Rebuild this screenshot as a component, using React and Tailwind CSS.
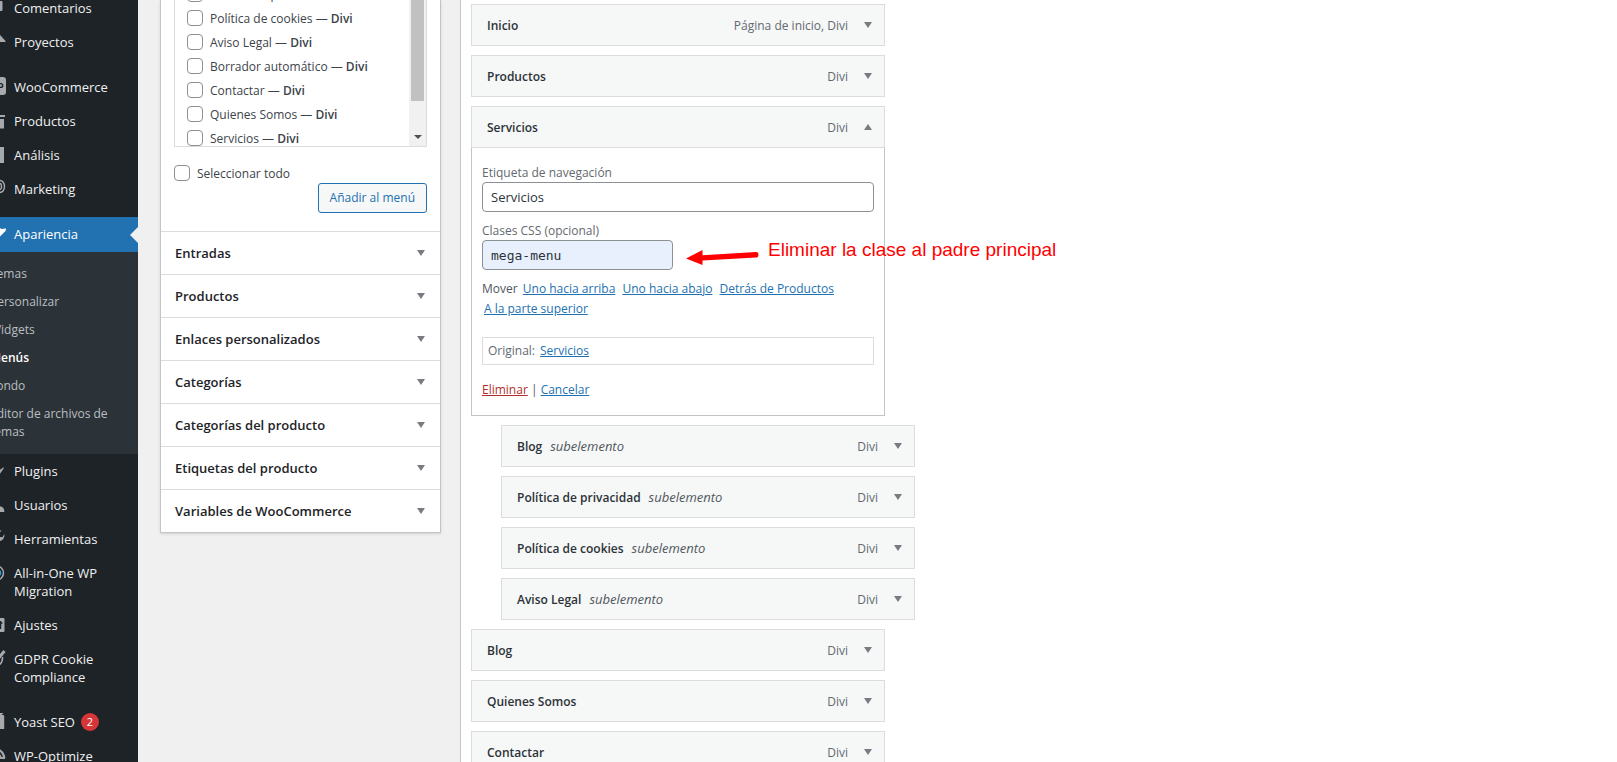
import React from "react";

const ICONS = {
  comments: <path d="M4 3h11.500q1 0 1 1v8q0 1-1 1H10l-5 4v-4H4q-1 0-1-1V4q0-1 1-1z" fill="#a7aaad" />,
  pin: <path d="M10 2l3 0 2 2 4.500 5v1H13l-7 8 1-9-4-1z" fill="#a7aaad" />,
  woo: (
    <>
      <rect x="0" y="0" width="20" height="18" rx="3" fill="#a7aaad" />
      <path d="M3 6l2 5 2-4 2 4 1-5" fill="none" stroke="#1d2327" strokeWidth="1.500" />
      <circle cx="14.800" cy="8.500" r="1.900" fill="none" stroke="#1d2327" strokeWidth="1.400" />
    </>
  ),
  archive: (
    <>
      <path d="M1 4h18v2H1z" fill="#a7aaad" />
      <path d="M2 8h16v9.500H2z" fill="#a7aaad" />
      <path d="M7 10h6v2H7z" fill="#1d2327" />
    </>
  ),
  chart: <path d="M2 11h4v7H2zM8 7h4v11H8zM13 2h5v16h-5z" fill="#a7aaad" />,
  marketing: (
    <g fill="none" stroke="#a7aaad" strokeWidth="1.400">
      <ellipse cx="14" cy="7.500" rx="4.500" ry="6" />
      <ellipse cx="13.500" cy="7.500" rx="2" ry="3" />
      <path d="M12 2L3 6v4l9 4" />
    </g>
  ),
  brush: <path d="M14 4l1.500 1 4.500-.5 0 1-.5 1.500L14 12.500l-2 1-8 6-2-2 7-7z" fill="#fff" />,
  plug: <path d="M18 6l-.5 1.800L14.500 12l-3 4-5 1-4 2 1-4 2-5 5-4 3 3z" fill="#a7aaad" />,
  user: (
    <>
      <circle cx="10" cy="6" r="4" fill="#a7aaad" />
      <path d="M2 17q0-6 6-6h4q6 0 6.300 5v1z" fill="#a7aaad" />
    </>
  ),
  wrench: (
    <path d="M18.300 5q.7 6-4.500 7L6 19l-4-3 8-8q-1-5 4-6.500h1.500L13 4.500l.5 3.500 3 .3z" fill="#a7aaad" />
  ),
  migration: (
    <>
      <ellipse cx="10.500" cy="10" rx="7" ry="7" fill="none" stroke="#a7aaad" strokeWidth="1.500" />
      <circle cx="12.300" cy="10" r="3" fill="#2aa3e0" />
    </>
  ),
  settings: (
    <>
      <rect x="2" y="3" width="16.500" height="14" rx="1" fill="#a7aaad" />
      <path d="M12 8h4.500M14.500 6v8" stroke="#1d2327" strokeWidth="1.500" />
      <path d="M6 6v8" stroke="#1d2327" strokeWidth="1.500" />
    </>
  ),
  gdpr: (
    <g fill="none" stroke="#a7aaad">
      <path d="M18.500 2L11 11 7 7" strokeWidth="3" />
      <path d="M16.500 8q.5 6-5.500 9.500Q4 14 4 4l7-2" strokeWidth="1.600" />
    </g>
  ),
  yoast: <path d="M4 3h9l1-2h3.500L15.500 3H17q1.200 0 1.200 1.200V17H4q-2 0-2-2V5q0-2 2-2z" fill="#a7aaad" />,
  optimize: (
    <g fill="none" stroke="#a7aaad" strokeWidth="2">
      <path d="M3 10q0-7 7-7 7 1 8.500 9" />
      <path d="M8 9q5-3 7 3l4 0M14 18l-3-5" />
    </g>
  ),
};

const TOP_MENU = [
  [["Comentarios", "comments"], ["Proyectos", "pin"]],
  [["WooCommerce", "woo"], ["Productos", "archive"], ["Análisis", "chart"], ["Marketing", "marketing"]],
];
const BOTTOM_MENU = [
  [
    ["Plugins", "plug"],
    ["Usuarios", "user"],
    ["Herramientas", "wrench"],
    ["All-in-One WP Migration", "migration"],
    ["Ajustes", "settings"],
    ["GDPR Cookie Compliance", "gdpr"],
  ],
  [["Yoast SEO", "yoast", 2], ["WP-Optimize", "optimize"]],
];
const APPEARANCE = ["Temas", "Personalizar", "Widgets", "Menús", "Fondo", "Editor de archivos de temas"];

const PAGES = [
  "Política de privacidad",
  "Política de cookies",
  "Aviso Legal",
  "Borrador automático",
  "Contactar",
  "Quienes Somos",
  "Servicios",
];
const SECTIONS = [
  "Entradas",
  "Productos",
  "Enlaces personalizados",
  "Categorías",
  "Categorías del producto",
  "Etiquetas del producto",
  "Variables de WooCommerce",
];

function Icon({ name }) {
  return (
    <svg className="mt-[7px] ml-2 h-5 w-5 shrink-0" viewBox="0 0 20 20" aria-hidden="true">
      {ICONS[name]}
    </svg>
  );
}

function Triangle({ up }) {
  return (
    <svg className="h-2 w-2 shrink-0" viewBox="0 0 8 8" aria-hidden="true">
      <path d={up ? "M0 7h8L4 1z" : "M0 1h8L4 7z"} fill="#787c82" />
    </svg>
  );
}

function MenuEntry({ label, icon, count }) {
  return (
    <li>
      <a href="#" className="flex text-[#f0f0f1]">
        <Icon name={icon} />
        <span className="flex items-center gap-1.5 py-2 pr-4 pl-2 leading-[18px]">
          {label}
          {count && (
            <span className="flex h-[18px] w-[18px] items-center justify-center rounded-full bg-[#d63638] text-[11px] text-white">
              {count}
            </span>
          )}
        </span>
      </a>
    </li>
  );
}

function MenuGroup({ items }) {
  return (
    <ul>
      {items.map(([label, icon, count]) => (
        <MenuEntry key={label} label={label} icon={icon} count={count} />
      ))}
    </ul>
  );
}

function Sidebar() {
  return (
    <nav className="-mt-[9px] -ml-[22px] flex w-[160px] shrink-0 flex-col gap-[11px] bg-[#1d2327] text-[13px]">
      {TOP_MENU.map((g, i) => (
        <MenuGroup key={i} items={g} />
      ))}
      <div>
        <a href="#" className="relative flex bg-[#2271b1] text-white">
          <Icon name="brush" />
          <span className="pt-2 pb-[9px] pl-2 leading-[18px]">Apariencia</span>
          <svg className="absolute top-[10px] right-0 h-4 w-2" viewBox="0 0 8 16" aria-hidden="true">
            <path d="M8 0v16L0 8z" fill="#f0f0f1" />
          </svg>
        </a>
        <ul className="bg-[#2c3338] py-2 text-[12px]">
          {APPEARANCE.map((s) => (
            <li key={s}>
              <a
                href="#"
                className={
                  s === "Menús"
                    ? "block py-[5px] pr-6 pl-3 leading-[18px] font-semibold text-white"
                    : "block py-[5px] pr-6 pl-3 leading-[18px] text-[#bbbec1]"
                }
              >
                {s}
              </a>
            </li>
          ))}
        </ul>
        <MenuGroup items={BOTTOM_MENU[0]} />
      </div>
      <MenuGroup items={BOTTOM_MENU[1]} />
    </nav>
  );
}

const CHECKBOX = "h-4 w-4 shrink-0 appearance-none rounded border border-[#8c8f94] bg-white";

function AddItems() {
  return (
    <section className="mr-[19px] ml-[22px] flex w-[281px] shrink-0 flex-col self-start border border-t-0 border-[#c3c4c7] bg-white shadow-sm">
      <div className="px-[13px] pb-[18px]">
        <div className="flex h-[147px] overflow-hidden border border-t-0 border-[#dcdcde]">
          <ul className="-mt-[18px] grow pl-3 text-[12px] text-[#3c434a]">
            {PAGES.map((p) => (
              <li key={p}>
                <label className="flex h-6 items-center gap-[7px]">
                  <input type="checkbox" className={CHECKBOX} />
                  <span className="pt-0.5">
                    {p} — <span className="font-semibold">Divi</span>
                  </span>
                </label>
              </li>
            ))}
          </ul>
          <div className="flex w-[17px] flex-col items-center bg-[#f1f1f1]">
            <div className="h-[101px] w-[13px] bg-[#c1c1c1]" />
            <svg className="mt-8 h-2 w-2" viewBox="0 0 8 8" aria-hidden="true">
              <path d="M0 2h8L4 6z" fill="#505050" />
            </svg>
          </div>
        </div>
        <label className="mt-4 flex h-5 items-center gap-[7px] text-[12px] text-[#3c434a]">
          <input type="checkbox" className={CHECKBOX} />
          <span className="pt-0.5">Seleccionar todo</span>
        </label>
        <div className="flex justify-end">
          <button className="h-[30px] rounded-[3px] border border-[#2271b1] bg-[#f6f7f7] px-[11px] text-[12px] text-[#2271b1]">
            Añadir al menú
          </button>
        </div>
      </div>
      {SECTIONS.map((s) => (
        <button
          key={s}
          className="flex h-[43px] items-center justify-between border-t border-[#dcdcde] pr-[15px] pl-3.5 text-left text-[13px] font-semibold text-[#1d2327]"
        >
          <span className="pt-0.5">{s}</span>
          <Triangle />
        </button>
      ))}
    </section>
  );
}

function ItemBar({ title, type = "Divi", sub, open }) {
  return (
    <div
      className={
        sub
          ? "ml-[30px] flex h-[42px] w-[414px] items-center border border-[#dcdcde] bg-[#f6f7f7] pr-3 pl-[15px] text-[12px]"
          : "flex h-[42px] w-[414px] items-center border border-[#dcdcde] bg-[#f6f7f7] pr-3 pl-[15px] text-[12px]"
      }
    >
      <div className="flex grow items-baseline pt-0.5">
        <span className="font-semibold text-[#2c3338]">{title}</span>
        {sub && <span className="ml-2 text-[13px] text-[#50575e] italic">subelemento</span>}
        <span className="ml-auto text-[#646970]">{type}</span>
      </div>
      <button aria-label={title} className="ml-4 flex">
        <Triangle up={open} />
      </button>
    </div>
  );
}

const LINK = "text-[#2271b1] underline";
const MOVE_LINK = "mx-0.5 inline-block text-[#2271b1] underline";
const FIELD = "block h-[30px] rounded border border-[#8c8f94] px-2 text-[13px] text-[#2c3338]";

function ItemSettings() {
  return (
    <div className="h-[268px] w-[414px] border border-t-0 border-[#c3c4c7] px-2.5 pt-4 text-[12px] leading-5">
      <label className="block leading-[18px] text-[#646970]">
        Etiqueta de navegación
        <input className={`${FIELD} w-full bg-white`} defaultValue="Servicios" />
      </label>
      <div className="relative mt-2.5">
        <label className="block leading-[18px] text-[#646970]">
          Clases CSS (opcional)
          <input
            className={`${FIELD} w-[191px] bg-[#e8f0fe] font-['DejaVu_Sans_Mono',monospace]`}
            defaultValue="mega-menu"
          />
        </label>
        <div className="absolute top-[18px] left-[204px] flex items-start gap-[9px] whitespace-nowrap">
          <svg className="mt-[7px] h-5 w-[73px]" viewBox="0 0 73 20" aria-hidden="true">
            <path d="M0 11.500L16.500 3v5.200L70 5q2.500 0 2.500 2.700T70 10.600l-53.500 2.800V18z" fill="#f00" />
          </svg>
          <span className="font-['Liberation_Sans',sans-serif] text-[19px] leading-5 text-[#f00]">
            Eliminar la clase al padre principal
          </span>
        </div>
      </div>
      <p className="mt-[9px] text-[#50575e]">
        Mover{" "}
        <a href="#" className={MOVE_LINK}>Uno hacia arriba</a>{" "}
        <a href="#" className={MOVE_LINK}>Uno hacia abajo</a>{" "}
        <a href="#" className={MOVE_LINK}>Detrás de Productos</a>{" "}
        <a href="#" className={MOVE_LINK}>A la parte superior</a>
      </p>
      <p className="mt-[18px] flex h-7 items-center gap-[5px] border border-[#dcdcde] px-[5px] text-[#646970]">
        Original:
        <a href="#" className={LINK}>Servicios</a>
      </p>
      <p className="mt-[15px] text-[#50575e]">
        <a href="#" className="text-[#b32d2e] underline">Eliminar</a> |{" "}
        <a href="#" className={LINK}>Cancelar</a>
      </p>
    </div>
  );
}

export default function App() {
  return (
    <div className="flex h-screen overflow-hidden bg-[#f0f0f1] font-['Open_Sans','Noto_Sans',sans-serif]">
      <Sidebar />
      <AddItems />
      <main className="flex grow flex-col gap-[9px] border-l border-[#c3c4c7] bg-white pt-1 pl-2.5 [&>*]:shrink-0">
        <ItemBar title="Inicio" type="Página de inicio, Divi" />
        <ItemBar title="Productos" />
        <div>
          <ItemBar title="Servicios" open />
          <ItemSettings />
        </div>
        <ItemBar title="Blog" sub />
        <ItemBar title="Política de privacidad" sub />
        <ItemBar title="Política de cookies" sub />
        <ItemBar title="Aviso Legal" sub />
        <ItemBar title="Blog" />
        <ItemBar title="Quienes Somos" />
        <ItemBar title="Contactar" />
      </main>
    </div>
  );
}
